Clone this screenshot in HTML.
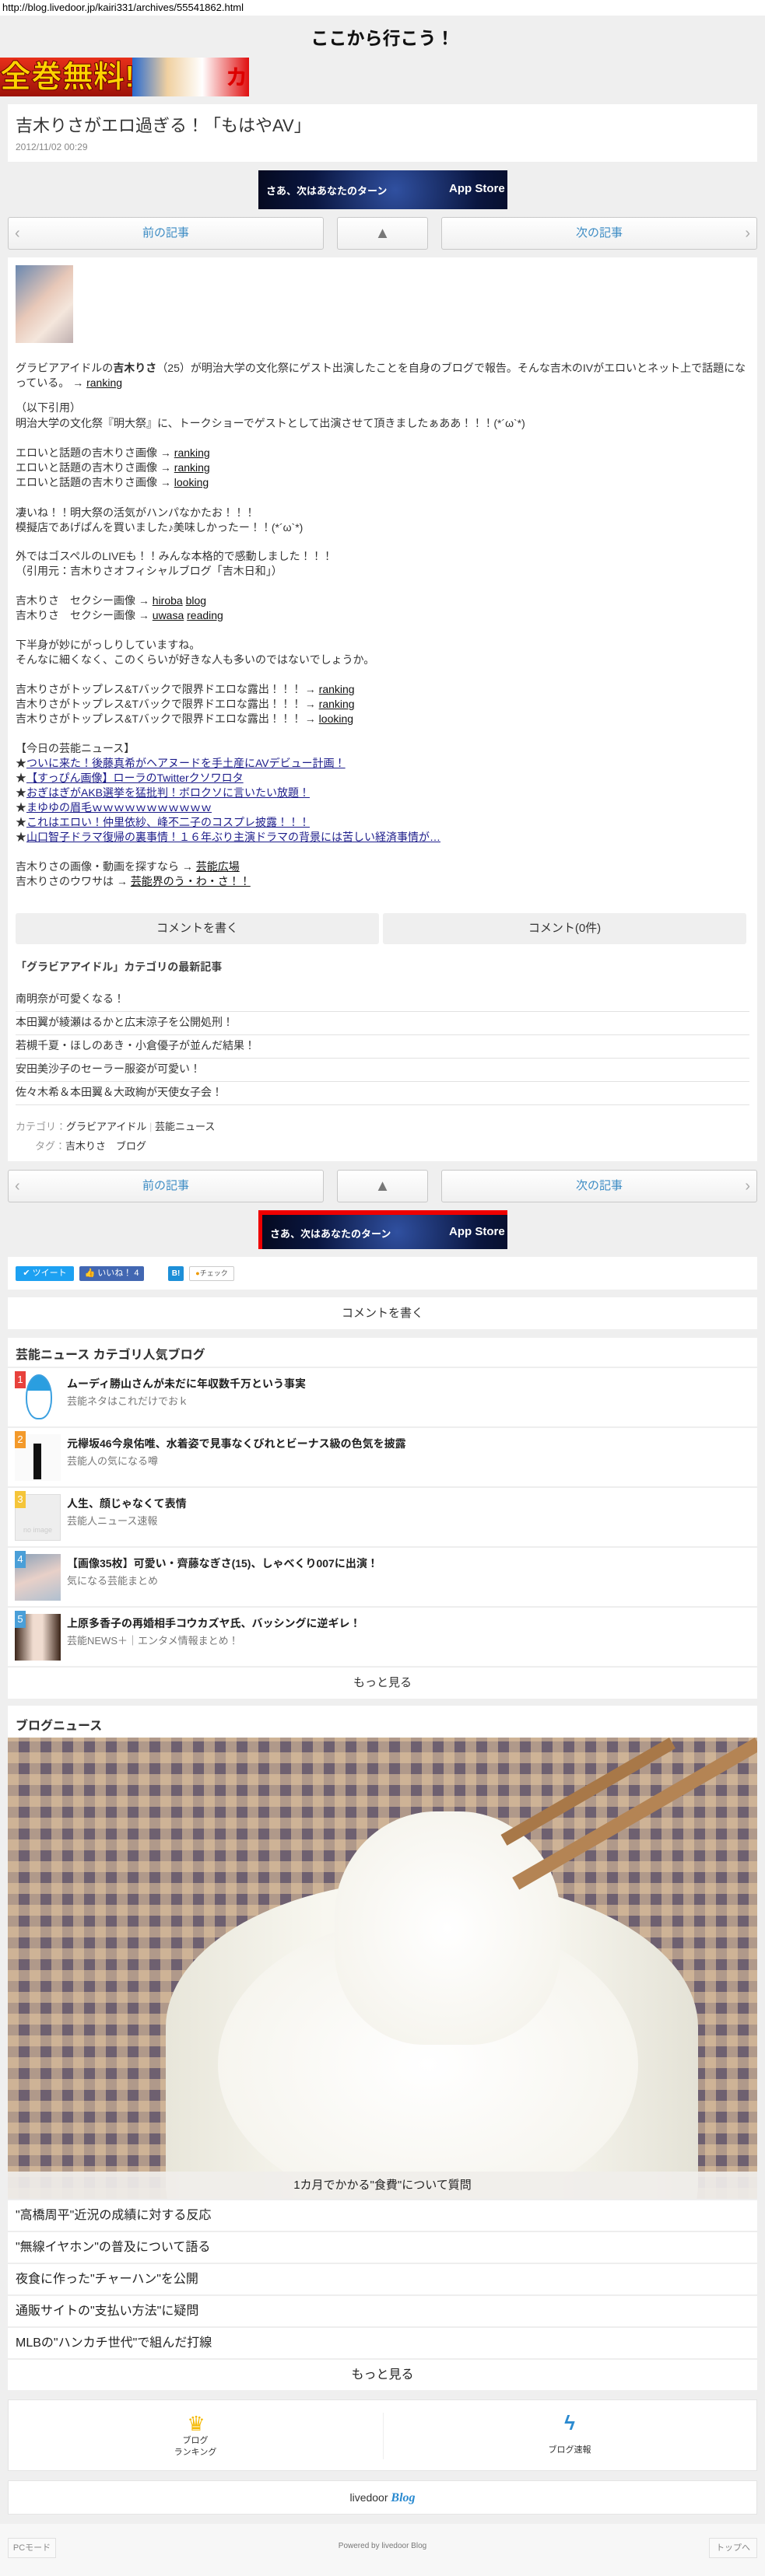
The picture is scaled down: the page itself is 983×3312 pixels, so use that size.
<!DOCTYPE html>
<html><head><meta charset="utf-8">
<style>
*{margin:0;padding:0;box-sizing:border-box}
body{width:983px;height:3312px;background:#efefef;position:relative;overflow:hidden;font-family:"Liberation Sans","Noto Sans CJK JP",sans-serif;color:#333}
.a{position:absolute}
.card{position:absolute;left:10px;width:963px;background:#fff}
.nav{position:absolute;height:42px;border:1px solid #c8c8c8;border-radius:3px;background:linear-gradient(#fff,#f0f0f0);color:#3d8cc4;font-size:15px;text-align:center;line-height:40px}
.line{position:absolute;left:20px;font-size:14px;line-height:19px;white-space:nowrap;color:#333}
.line a{color:#111;text-decoration:underline}
.line a.n{color:#1c1c8a}
.sep{position:absolute;left:20px;width:943px;height:1px;background:#e2e2e2}
.rk{position:absolute;left:0;width:963px;height:77px;border-top:2px solid #eee}
.rk .th{position:absolute;left:9px;top:8px;width:59px;height:60px;background:#ddd}
.rk .b{position:absolute;left:9px;top:4px;width:14px;height:22px;color:#fff;font-size:13px;text-align:center;line-height:22px}
.rk .t{position:absolute;left:76px;top:10px;font-size:14px;font-weight:bold;color:#222;white-space:nowrap}
.rk .s{position:absolute;left:76px;top:32px;font-size:13px;color:#777;white-space:nowrap}
.bn{position:absolute;left:0;width:963px;height:41px;border-top:2px solid #eee;font-size:16px;line-height:39px;padding-left:10px;color:#222}
</style></head><body>
<div class="a" style="left:0;top:0;width:983px;height:20px;background:#fff;font-size:13px;line-height:20px;padding-left:3px;color:#000">http://blog.livedoor.jp/kairi331/archives/55541862.html</div>
<div class="a" style="left:0;top:30px;width:983px;text-align:center;font-size:23px;font-weight:bold;color:#111">ここから行こう！</div>
<div class="a" style="left:0;top:74px;width:170px;height:50px;background:linear-gradient(#e8301a,#9c1208);color:#ffd400;font-size:40px;font-weight:bold;line-height:50px;overflow:hidden;white-space:nowrap;-webkit-text-stroke:1px #600">全巻無料!</div>
<div class="a" style="left:170px;top:74px;width:150px;height:50px;background:linear-gradient(90deg,#2a6bd0,#f0d0a0 30%,#fff 60%,#e01010);overflow:hidden"><div class="a" style="left:120px;top:4px;color:#d00;font-size:28px;font-weight:bold">カメ</div></div>

<div class="card" style="top:134px;height:74px">
<div class="a" style="left:10px;top:10px;font-size:22px;color:#333;white-space:nowrap">吉木りさがエロ過ぎる！「もはやAV」</div>
<div class="a" style="left:10px;top:48px;font-size:12px;color:#888">2012/11/02 00:29</div>
</div>
<div class="a" style="left:332px;top:219px;width:320px;height:50px;background:radial-gradient(circle at 55% 50%,#3050a0,#0a1640 60%,#050a20);color:#fff;font-size:13px;font-weight:bold">
<span class="a" style="left:10px;top:16px">さあ、次はあなたのターン</span><span class="a" style="left:245px;top:15px;font-size:15px"> App Store</span></div>

<div class="nav" style="left:10px;top:279px;width:406px">前の記事<span class="a" style="left:8px;top:0;color:#aaa;font-size:20px">‹</span></div>
<div class="nav" style="left:433px;top:279px;width:117px;color:#777;font-size:20px">&#9650;</div>
<div class="nav" style="left:567px;top:279px;width:406px">次の記事<span class="a" style="right:8px;top:0;color:#aaa;font-size:20px">›</span></div>

<div class="card" style="top:331px;height:1162px"></div>
<div class="a" style="left:20px;top:341px;width:74px;height:100px;background:linear-gradient(135deg,#6a88b0,#e8c8b8 45%,#f4e6dc 70%,#c0b0b0)"></div>
<div class="line" style="top:464px">グラビアアイドルの<b>吉木りさ</b>（25）が明治大学の文化祭にゲスト出演したことを自身のブログで報告。そんな吉木のIVがエロいとネット上で話題にな</div>
<div class="line" style="top:483px">っている。 → <a>ranking</a></div>
<div class="line" style="top:515px">（以下引用）</div>
<div class="line" style="top:535px">明治大学の文化祭『明大祭』に、トークショーでゲストとして出演させて頂きましたぁああ！！！(*´ω`*)</div>
<div class="line" style="top:573px">エロいと話題の吉木りさ画像 → <a>ranking</a></div>
<div class="line" style="top:592px">エロいと話題の吉木りさ画像 → <a>ranking</a></div>
<div class="line" style="top:611px">エロいと話題の吉木りさ画像 → <a>looking</a></div>
<div class="line" style="top:650px">凄いね！！明大祭の活気がハンパなかたお！！！</div>
<div class="line" style="top:669px">模擬店であげぱんを買いました♪美味しかったー！！(*´ω`*)</div>
<div class="line" style="top:706px">外ではゴスペルのLIVEも！！みんな本格的で感動しました！！！</div>
<div class="line" style="top:725px">（引用元：吉木りさオフィシャルブログ「吉木日和」）</div>
<div class="line" style="top:763px">吉木りさ　セクシー画像 → <a>hiroba</a> <a>blog</a></div>
<div class="line" style="top:782px">吉木りさ　セクシー画像 → <a>uwasa</a> <a>reading</a></div>
<div class="line" style="top:820px">下半身が妙にがっしりしていますね。</div>
<div class="line" style="top:839px">そんなに細くなく、このくらいが好きな人も多いのではないでしょうか。</div>
<div class="line" style="top:877px">吉木りさがトップレス&amp;Tバックで限界ドエロな露出！！！ → <a>ranking</a></div>
<div class="line" style="top:896px">吉木りさがトップレス&amp;Tバックで限界ドエロな露出！！！ → <a>ranking</a></div>
<div class="line" style="top:915px">吉木りさがトップレス&amp;Tバックで限界ドエロな露出！！！ → <a>looking</a></div>
<div class="line" style="top:953px">【今日の芸能ニュース】</div>
<div class="line" style="top:972px">★<a class="n">ついに来た！後藤真希がヘアヌードを手土産にAVデビュー計画！</a></div>
<div class="line" style="top:991px">★<a class="n">【すっぴん画像】ローラのTwitterクソワロタ</a></div>
<div class="line" style="top:1010px">★<a class="n">おぎはぎがAKB選挙を猛批判！ボロクソに言いたい放題！</a></div>
<div class="line" style="top:1029px">★<a class="n">まゆゆの眉毛ｗｗｗｗｗｗｗｗｗｗｗ</a></div>
<div class="line" style="top:1048px">★<a class="n">これはエロい！仲里依紗、峰不二子のコスプレ披露！！！</a></div>
<div class="line" style="top:1067px">★<a class="n">山口智子ドラマ復帰の裏事情！１６年ぶり主演ドラマの背景には苦しい経済事情が…</a></div>
<div class="line" style="top:1105px">吉木りさの画像・動画を探すなら → <a>芸能広場</a></div>
<div class="line" style="top:1124px">吉木りさのウワサは → <a>芸能界のう・わ・さ！！</a></div>

<div class="a" style="left:20px;top:1174px;width:467px;height:40px;background:#efefef;border-radius:3px;text-align:center;line-height:40px;font-size:15px">コメントを書く</div>
<div class="a" style="left:492px;top:1174px;width:467px;height:40px;background:#efefef;border-radius:3px;text-align:center;line-height:40px;font-size:15px">コメント(0件)</div>
<div class="line" style="top:1234px;font-size:14px;font-weight:bold;color:#444">「グラビアアイドル」カテゴリの最新記事</div>
<div class="line" style="top:1275px">南明奈が可愛くなる！</div><div class="sep" style="top:1300px"></div>
<div class="line" style="top:1305px">本田翼が綾瀬はるかと広末涼子を公開処刑！</div><div class="sep" style="top:1330px"></div>
<div class="line" style="top:1335px">若槻千夏・ほしのあき・小倉優子が並んだ結果！</div><div class="sep" style="top:1360px"></div>
<div class="line" style="top:1365px">安田美沙子のセーラー服姿が可愛い！</div><div class="sep" style="top:1390px"></div>
<div class="line" style="top:1395px">佐々木希＆本田翼＆大政絢が天使女子会！</div><div class="sep" style="top:1420px"></div>
<div class="line" style="top:1439px;font-size:13px"><span style="color:#999">カテゴリ：</span>グラビアアイドル <span style="color:#ccc">|</span> 芸能ニュース</div>
<div class="line" style="top:1464px;left:45px;font-size:13px"><span style="color:#999">タグ：</span>吉木りさ　ブログ</div>

<div class="nav" style="left:10px;top:1504px;width:406px">前の記事<span class="a" style="left:8px;top:0;color:#aaa;font-size:20px">‹</span></div>
<div class="nav" style="left:433px;top:1504px;width:117px;color:#777;font-size:20px">&#9650;</div>
<div class="nav" style="left:567px;top:1504px;width:406px">次の記事<span class="a" style="right:8px;top:0;color:#aaa;font-size:20px">›</span></div>

<div class="a" style="left:332px;top:1556px;width:320px;height:50px;background:#e00;"><div class="a" style="left:5px;top:6px;width:315px;height:44px;background:radial-gradient(circle at 55% 50%,#3050a0,#0a1640 60%,#050a20);color:#fff;font-size:13px;font-weight:bold"><span class="a" style="left:10px;top:14px">さあ、次はあなたのターン</span><span class="a" style="left:240px;top:13px;font-size:15px"> App Store</span></div></div>

<div class="card" style="top:1616px;height:42px">
<div class="a" style="left:10px;top:12px;width:75px;height:19px;background:#1da1f2;border-radius:2px;color:#fff;font-size:11px;line-height:19px;text-align:center">✔ ツイート</div>
<div class="a" style="left:92px;top:12px;width:83px;height:19px;background:#4267b2;border-radius:2px;color:#fff;font-size:11px;line-height:19px;text-align:center">👍 いいね！ 4</div>
<div class="a" style="left:206px;top:12px;width:20px;height:19px;background:#1d8fd8;border-radius:2px;color:#fff;font-size:10px;font-weight:bold;line-height:19px;text-align:center">B!</div>
<div class="a" style="left:233px;top:12px;width:58px;height:19px;border:1px solid #ccc;border-radius:2px;color:#555;font-size:9px;line-height:17px;text-align:center"><span style="color:#e90">●</span>チェック</div>
</div>
<div class="card" style="top:1668px;height:41px;text-align:center;line-height:41px;font-size:15px">コメントを書く</div>

<div class="card" style="top:1720px;height:464px">
<div class="a" style="left:10px;top:8px;font-size:16px;font-weight:bold;color:#333">芸能ニュース カテゴリ人気ブログ</div>
<div class="rk" style="top:37px"><div class="th" style="background:#fff;border:0"><div class="a" style="left:14px;top:0;width:34px;height:58px;border:2px solid #3ba0e0;border-radius:50% 50% 45% 45%;background:linear-gradient(#2a9ee0 35%,#fff 35%)"></div></div><div class="b" style="background:#e8413c">1</div><div class="t">ムーディ勝山さんが未だに年収数千万という事実</div><div class="s">芸能ネタはこれだけでおｋ</div></div>
<div class="rk" style="top:114px"><div class="th" style="background:#fafafa"><div class="a" style="left:24px;top:12px;width:10px;height:46px;background:#111"></div></div><div class="b" style="background:#f39a2b">2</div><div class="t">元欅坂46今泉佑唯、水着姿で見事なくびれとビーナス級の色気を披露</div><div class="s">芸能人の気になる噂</div></div>
<div class="rk" style="top:191px"><div class="th" style="background:#eee;border:1px solid #ddd;color:#ccc;font-size:9px;text-align:center;padding-top:40px">no image</div><div class="b" style="background:#f5c53a">3</div><div class="t">人生、顔じゃなくて表情</div><div class="s">芸能人ニュース速報</div></div>
<div class="rk" style="top:268px"><div class="th" style="background:linear-gradient(160deg,#8aa0b8,#e8d0c8 50%,#b0c0d0)"></div><div class="b" style="background:#4a9fd8">4</div><div class="t">【画像35枚】可愛い・齊藤なぎさ(15)、しゃべくり007に出演！</div><div class="s">気になる芸能まとめ</div></div>
<div class="rk" style="top:345px"><div class="th" style="background:linear-gradient(90deg,#3a2418,#f0dcd0 40%,#f0dcd0 60%,#3a2418)"></div><div class="b" style="background:#4a9fd8">5</div><div class="t">上原多香子の再婚相手コウカズヤ氏、バッシングに逆ギレ！</div><div class="s">芸能NEWS＋｜エンタメ情報まとめ！</div></div>
<div class="a" style="left:0;top:422px;width:963px;height:42px;border-top:2px solid #eee;text-align:center;line-height:40px;font-size:15px">もっと見る</div>
</div>

<div class="card" style="top:2193px;height:880px">
<div class="a" style="left:10px;top:12px;font-size:16px;font-weight:bold;color:#333">ブログニュース</div>
<div class="a" style="left:0;top:41px;width:963px;height:593px;overflow:hidden;background-color:#6e6070;background-image:repeating-linear-gradient(90deg,rgba(230,200,160,.55) 0 14px,transparent 14px 28px),repeating-linear-gradient(0deg,rgba(230,200,160,.55) 0 14px,transparent 14px 28px)">
<div class="a" style="left:203px;top:182px;width:684px;height:560px;border-radius:50% 50% 42% 42%/34% 34% 30% 30%;background:linear-gradient(90deg,#e8e6da,#f8f7f0 30%,#f8f7f0 70%,#e4e2d6)"></div>
<div class="a" style="left:270px;top:230px;width:540px;height:380px;border-radius:50%;background:radial-gradient(#fff,#f3f1e8)"></div>
<div class="a" style="left:420px;top:95px;width:290px;height:300px;border-radius:45% 45% 40% 40%;background:radial-gradient(#fff,#f3f1e8)"></div>
<div class="a" style="left:960px;top:0;width:18px;height:360px;background:#b48454;transform:rotate(60deg);transform-origin:top left"></div>
<div class="a" style="left:850px;top:0;width:16px;height:250px;background:#a87848;transform:rotate(60deg);transform-origin:top left"></div>
<div class="a" style="left:0;top:558px;width:963px;height:35px;background:rgba(240,238,234,.92);text-align:center;line-height:35px;font-size:15px;color:#222">1カ月でかかる"食費"について質問</div>
</div>
<div class="bn" style="top:634px">"高橋周平"近況の成績に対する反応</div>
<div class="bn" style="top:675px">"無線イヤホン"の普及について語る</div>
<div class="bn" style="top:716px">夜食に作った"チャーハン"を公開</div>
<div class="bn" style="top:757px">通販サイトの"支払い方法"に疑問</div>
<div class="bn" style="top:798px">MLBの"ハンカチ世代"で組んだ打線</div>
<div class="bn" style="top:839px;text-align:center;padding:0">もっと見る</div>
</div>

<div class="card" style="top:3085px;height:92px;border:1px solid #e4e4e4">
<div class="a" style="left:481px;top:16px;width:1px;height:60px;background:#eee"></div>
<div class="a" style="left:226px;top:16px;width:30px;font-size:26px;color:#f5b800;text-align:center;line-height:28px">♛</div>
<div class="a" style="left:200px;top:45px;width:80px;text-align:center;font-size:11px;line-height:15px">ブログ<br>ランキング</div>
<div class="a" style="left:706px;top:14px;width:30px;font-size:26px;color:#2a8ad0;text-align:center;font-weight:bold">ϟ</div>
<div class="a" style="left:681px;top:55px;width:80px;text-align:center;font-size:11px">ブログ速報</div>
</div>
<div class="card" style="top:3189px;height:44px;border:1px solid #e4e4e4;text-align:center;line-height:42px;font-size:14px;color:#333">livedoor <i style="color:#2a8ad0;font-family:'Liberation Serif',serif;font-weight:bold;font-size:16px">Blog</i></div>
<div class="a" style="left:0;top:3245px;width:983px;height:67px;background:#f7f7f7"></div>
<div class="a" style="left:10px;top:3263px;width:62px;height:26px;border:1px solid #e0e0e0;background:#fafafa;font-size:11px;color:#888;text-align:center;line-height:24px">PCモード</div>
<div class="a" style="left:0;top:3268px;width:983px;text-align:center;font-size:10px;color:#777">Powered by livedoor Blog</div>
<div class="a" style="left:911px;top:3263px;width:62px;height:26px;border:1px solid #e0e0e0;background:#fafafa;font-size:11px;color:#888;text-align:center;line-height:24px">トップへ</div>
</body></html>
